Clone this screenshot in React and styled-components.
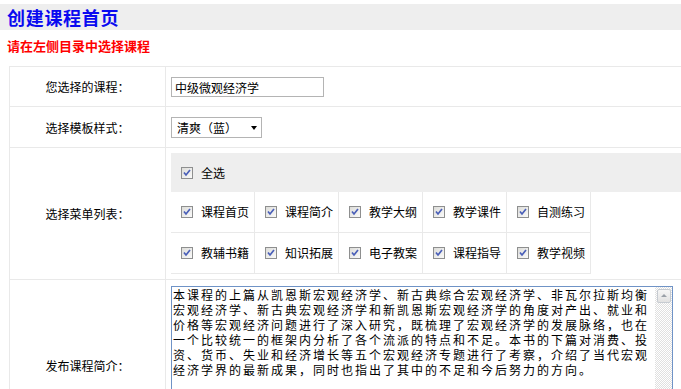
import React, { useEffect, useRef } from "react";
import styled, { createGlobalStyle } from "styled-components";

const GlobalStyle = createGlobalStyle`
  html, body {
    margin: 0;
    padding: 0;
    overflow: hidden;
    background: #fff;
  }
  body {
    font-family: "Noto Sans CJK SC", "Liberation Sans", sans-serif;
    font-size: 12px;
    color: #000;
  }
`;

const Page = styled.div`
  width: 681px;
  padding-top: 4px;
`;

const TitleBar = styled.div`
  height: 26px;
  background: #eeeeee;
  display: flex;
  align-items: center;
  padding-left: 7px;
`;

const Title = styled.h1`
  margin: 0;
  font-size: 18px;
  font-weight: bold;
  letter-spacing: 0.7px;
  color: #0a0af0;
  line-height: 26px;
`;

const Notice = styled.div`
  margin: 8px 0 13px 7px;
  font-size: 13px;
  line-height: 15px;
  font-weight: bold;
  color: #ff0000;
`;

const Table = styled.div`
  display: grid;
  grid-template-columns: 156px 600px;
  margin-left: 9px;
  width: max-content;
  border-top: 1px solid #e9e9e9;
  border-left: 1px solid #e9e9e9;
`;

const LabelCell = styled.div`
  display: flex;
  align-items: center;
  justify-content: center;
  border-right: 1px solid #e9e9e9;
  border-bottom: 1px solid #e9e9e9;
  font-size: 12px;
`;

const FieldCell = styled.div`
  border-right: 1px solid #e9e9e9;
  border-bottom: 1px solid #e9e9e9;
  padding: ${(p) => p.$pad || "10px 5px"};
  display: flex;
  flex-direction: column;
  align-items: flex-start;
`;

const TextInput = styled.input`
  box-sizing: border-box;
  width: 153px;
  height: 20px;
  border: 1px solid #b4b4b4;
  padding: 0 3px;
  font-family: "Noto Sans CJK SC", sans-serif;
  font-size: 12px;
  color: #000;
  outline: none;
`;

const SelectWrap = styled.div`
  position: relative;
  width: 91px;
  height: 21px;
`;

const Select = styled.select`
  appearance: none;
  box-sizing: border-box;
  width: 91px;
  height: 21px;
  border: 1px solid #b4b4b4;
  background: #fff;
  padding: 0 0 0 5px;
  font-family: "Noto Sans CJK SC", sans-serif;
  font-size: 12px;
  color: #000;
  outline: none;
`;

const Arrow = styled.span`
  position: absolute;
  right: 5px;
  top: 9px;
  width: 0;
  height: 0;
  border-left: 3.5px solid transparent;
  border-right: 3.5px solid transparent;
  border-top: 4px solid #000;
  pointer-events: none;
`;

const AllBar = styled.div`
  box-sizing: border-box;
  width: 100%;
  height: 39px;
  background: #eeeeee;
  display: flex;
  align-items: center;
  padding-left: 10px;
`;

const MenuGrid = styled.div`
  display: grid;
  grid-template-columns: repeat(5, 84px);
`;

const MenuItem = styled.label`
  box-sizing: border-box;
  height: 41px;
  display: flex;
  align-items: center;
  padding-left: 10px;
  border-right: 1px solid #e9e9e9;
  border-bottom: 1px solid #e9e9e9;
`;

const BoxText = styled.span`
  margin-left: 8px;
  font-size: 12px;
  line-height: 14px;
`;

const IntroBox = styled.div`
  box-sizing: border-box;
  display: flex;
  width: 502px;
  height: 158px;
  border: 1px solid #6f93c6;
  background: #fff;
`;

const Intro = styled.textarea`
  flex: 1;
  box-sizing: border-box;
  height: 100%;
  border: none;
  padding: 0 0 0 1px;
  margin: 0;
  resize: none;
  overflow: hidden;
  font-family: "Noto Sans CJK SC", sans-serif;
  font-size: 12px;
  line-height: 15px;
  letter-spacing: 2px;
  color: #000;
  outline: none;
`;

const ScrollTrack = styled.div`
  width: 17px;
  flex-shrink: 0;
  background: repeating-conic-gradient(#e0e0e0 0% 25%, #ffffff 0% 50%) 0 0 / 2px 2px;
`;

const ScrollButton = styled.div`
  box-sizing: border-box;
  width: 14px;
  height: 14px;
  margin: 2px 0 0 2px;
  border: 1px solid #c6cbd1;
  border-radius: 2px;
  background: linear-gradient(#f6f6f6, #e2e2e2);
  display: flex;
  align-items: center;
  justify-content: center;

  &::before {
    content: "";
    width: 0;
    height: 0;
    border-left: 3.5px solid transparent;
    border-right: 3.5px solid transparent;
    border-bottom: 3.5px solid #9aa0a8;
    margin-top: -1px;
  }
`;

const Check = () => (
  <svg width="12" height="12" viewBox="0 0 12 12">
    <defs>
      <linearGradient id="cbg" x1="0" y1="0" x2="1" y2="1">
        <stop offset="0" stopColor="#dcdcd8" />
        <stop offset="1" stopColor="#fbfbfb" />
      </linearGradient>
    </defs>
    <rect x="0.5" y="0.5" width="11" height="11" fill="url(#cbg)" stroke="#8e8f8f" />
    <path d="M3 5.5 L5 8 L9 3" stroke="#4a5fb8" strokeWidth="1.7" fill="none" />
  </svg>
);

const menus = [
  "课程首页",
  "课程简介",
  "教学大纲",
  "教学课件",
  "自测练习",
  "教辅书籍",
  "知识拓展",
  "电子教案",
  "课程指导",
  "教学视频",
];

const introText =
  "本课程的上篇从凯恩斯宏观经济学、新古典综合宏观经济学、非瓦尔拉斯均衡宏观经济学、新古典宏观经济学和新凯恩斯宏观经济学的角度对产出、就业和价格等宏观经济问题进行了深入研究，既梳理了宏观经济学的发展脉络，也在一个比较统一的框架内分析了各个流派的特点和不足。本书的下篇对消费、投资、货币、失业和经济增长等五个宏观经济专题进行了考察，介绍了当代宏观经济学界的最新成果，同时也指出了其中的不足和今后努力的方向。";

const App = () => {
  const introRef = useRef(null);

  useEffect(() => {
    const el = introRef.current;
    if (el) {
      el.focus();
      el.setSelectionRange(el.value.length, el.value.length);
    }
  }, []);

  return (
    <Page>
      <GlobalStyle />
      <TitleBar>
        <Title>创建课程首页</Title>
      </TitleBar>
      <Notice>请在左侧目录中选择课程</Notice>
      <Table>
        <LabelCell>您选择的课程：</LabelCell>
        <FieldCell $pad="10px 5px 9px">
          <TextInput defaultValue="中级微观经济学" />
        </FieldCell>

        <LabelCell>选择模板样式：</LabelCell>
        <FieldCell $pad="10px 5px 9px">
          <SelectWrap>
            <Select defaultValue="blue">
              <option value="blue">清爽（蓝）</option>
            </Select>
            <Arrow />
          </SelectWrap>
        </FieldCell>

        <LabelCell>选择菜单列表：</LabelCell>
        <FieldCell $pad="5px 5px 5px">
          <AllBar>
            <Check />
            <BoxText>全选</BoxText>
          </AllBar>
          <MenuGrid>
            {menus.map((m) => (
              <MenuItem key={m}>
                <Check />
                <BoxText>{m}</BoxText>
              </MenuItem>
            ))}
          </MenuGrid>
        </FieldCell>

        <LabelCell>发布课程简介：</LabelCell>
        <FieldCell $pad="6px 5px">
          <IntroBox>
            <Intro ref={introRef} defaultValue={introText} />
            <ScrollTrack>
              <ScrollButton />
            </ScrollTrack>
          </IntroBox>
        </FieldCell>
      </Table>
    </Page>
  );
};

export default App;
